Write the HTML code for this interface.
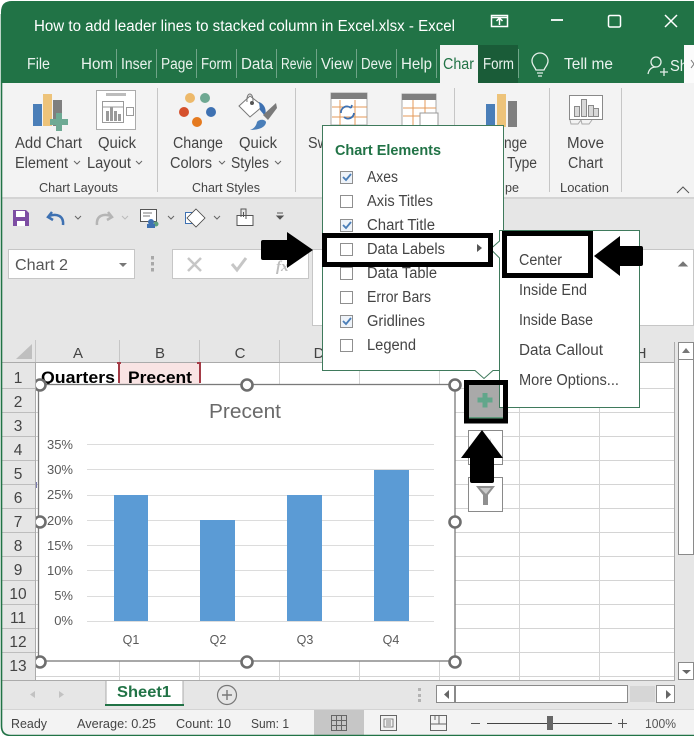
<!DOCTYPE html>
<html><head><meta charset="utf-8"><style>
html,body{margin:0;padding:0;background:#fff;width:694px;height:737px;overflow:hidden}
svg{display:block}
text{font-family:"Liberation Sans",sans-serif;fill:#444;font-size:15.5px}
.w{fill:#fff}
.t{fill:#eaf3ee}
</style></head><body>
<svg width="694" height="737" viewBox="0 0 694 737" xmlns="http://www.w3.org/2000/svg">
<rect width="694" height="737" fill="#fff"/>
<!-- window -->
<path d="M1 737V12Q1 1 12 1H694V83H1z" fill="#217346"/>
<text x="34" y="31" class="w" textLength="421" lengthAdjust="spacingAndGlyphs">How to add leader lines to stacked column in Excel.xlsx  -  Excel</text>
<g fill="none" stroke="#fff" stroke-width="1.5">
<rect x="491.500" y="15.500" width="16" height="11"/><path d="M499.500 25V18M496.500 21l3-3 3 3M491.500 17.500h16"/>
<path d="M551 20h12" stroke-width="1.800"/>
<rect x="608.500" y="15.500" width="12" height="11.500" rx="1.500"/>
<path d="M665 15l12 12M677 15l-12 12" stroke-width="1.500"/>
</g>
<!-- tabs -->
<g class="t">
<text class="t" x="27" y="69" textLength="23" lengthAdjust="spacingAndGlyphs">File</text>
<text class="t" x="81" y="69" textLength="32" lengthAdjust="spacingAndGlyphs">Hom</text>
<text class="t" x="121" y="69" textLength="31" lengthAdjust="spacingAndGlyphs">Inser</text>
<text class="t" x="161" y="69" textLength="32" lengthAdjust="spacingAndGlyphs">Page</text>
<text class="t" x="201" y="69" textLength="31" lengthAdjust="spacingAndGlyphs">Form</text>
<text class="t" x="241" y="69" textLength="32" lengthAdjust="spacingAndGlyphs">Data</text>
<text class="t" x="281" y="69" textLength="31" lengthAdjust="spacingAndGlyphs">Revie</text>
<text class="t" x="321" y="69" textLength="32" lengthAdjust="spacingAndGlyphs">View</text>
<text class="t" x="361" y="69" textLength="31" lengthAdjust="spacingAndGlyphs">Deve</text>
<text class="t" x="401" y="69" textLength="31" lengthAdjust="spacingAndGlyphs">Help</text>
</g>
<g stroke="#6fa488" stroke-width="1"><path d="M116.500 49V78M156.500 49V78M196.500 49V78M236.500 49V78M276.500 49V78M316.500 49V78M356.500 49V78M396.500 49V78M436.500 49V78M518.500 49V78"/></g>
<rect x="440" y="45" width="38" height="38" fill="#f3f3f3"/>
<text x="443" y="69" style="fill:#217346" textLength="31" lengthAdjust="spacingAndGlyphs">Char</text>
<rect x="478" y="45" width="40" height="38" fill="#1a5c38"/>
<text class="t" x="483" y="69" textLength="31" lengthAdjust="spacingAndGlyphs">Form</text>
<g fill="none" stroke="#e4efe9" stroke-width="1.300">
<path d="M536 70c-1-3-4-5-4-9a8 8 0 0 1 16 0c0 4-3 6-4 9zM537 73h6M538 76h4"/>
<circle cx="656" cy="62" r="5"/><path d="M648 74c1-5 4-7 8-7M660 72h8M664 68v8"/>
</g>
<text class="t" x="564" y="69" textLength="49" lengthAdjust="spacingAndGlyphs">Tell me</text>
<text class="t" x="670" y="71" textLength="18" lengthAdjust="spacingAndGlyphs">Sh</text>
<rect x="684" y="45" width="10" height="38" fill="#fbfbfb"/>
<path d="M691 60l3 4-3 4" fill="none" stroke="#777" stroke-width="1"/>
<!-- ribbon -->
<rect x="2" y="83" width="692" height="114" fill="#f3f3f3"/>
<rect x="2" y="197" width="692" height="2" fill="#d4d4d4"/>
<g fill="#c6c6c6"><rect x="157" y="88" width="1" height="104"/><rect x="295" y="88" width="1" height="104"/><rect x="454" y="88" width="1" height="104"/><rect x="549" y="88" width="1" height="104"/><rect x="621" y="88" width="1" height="104"/></g>
<!-- add chart element -->
<rect x="33" y="104" width="9" height="22" fill="#4a7eb8"/><rect x="43" y="94" width="9" height="32" fill="#edc37a"/><rect x="53" y="100" width="9" height="26" fill="#7f7f7f"/>
<path d="M56 113h6v6h6v6h-6v6h-6v-6h-6v-6h6z" fill="#6eaa94"/>
<!-- quick layout -->
<rect x="96.500" y="90.500" width="39" height="39" fill="#fff" stroke="#ababab"/>
<rect x="106" y="93" width="20" height="3" fill="#bcbcbc"/>
<g fill="none" stroke="#9a9a9a"><rect x="102.500" y="101.500" width="21" height="21"/><path d="M103 107h20"/><rect x="126.500" y="107.500" width="7" height="8"/></g>
<g fill="#9a9a9a"><rect x="106" y="111" width="3" height="10"/><rect x="110" y="107" width="3" height="14"/><rect x="114" y="111" width="3" height="10"/><rect x="118" y="114" width="3" height="7"/></g>
<!-- change colors -->
<circle cx="190" cy="98" r="5" fill="#edb96a"/><circle cx="205" cy="98" r="5" fill="#6ea892"/><circle cx="184" cy="112" r="5" fill="#d5502c"/><circle cx="211" cy="112" r="5" fill="#3e71b2"/><circle cx="197" cy="122" r="5" fill="#e57a1f"/>
<!-- quick styles -->
<path d="M239 106l11-10 13 10-13 11z" fill="#fff" stroke="#777" stroke-width="1"/>
<path d="M247 102c-1-10 6-11 6-1" fill="none" stroke="#777"/>
<circle cx="252" cy="103" r="2" fill="#555"/>
<path d="M259 102c5 2 8 7 6 14l-5-6z" fill="#3e71b2"/>
<path d="M263 115l13-12 1 5-9 12z" fill="#7a7a7a"/>
<path d="M250 130c3-1 6-3 7-8 2-3 8-3 9 0 0 4-5 8-16 8z" fill="#4a7eb8"/>
<!-- switch / select -->
<rect x="331" y="93" width="36" height="32" fill="#fff" stroke="#aaa"/><rect x="331" y="93" width="36" height="6" fill="#7f7f7f"/>
<path d="M340 100v25M355 100v25M332 107h35M332 117h35" stroke="#e49a58" fill="none"/>
<path d="M341 113a6 6 0 0 1 10-5M351 108l1-3M354 113a6 6 0 0 1-10 4" stroke="#3e71b2" stroke-width="1.800" fill="none"/>
<rect x="402" y="94" width="34" height="32" fill="#fff" stroke="#aaa"/><rect x="402" y="94" width="34" height="6" fill="#7f7f7f"/>
<path d="M413 100v25M425 100v25M403 108h33M403 116h33" stroke="#e49a58" fill="none"/>
<rect x="420" y="113" width="18" height="14" fill="#fff" stroke="#999"/>
<!-- change type -->
<rect x="486" y="104" width="9" height="23" fill="#4a7eb8"/><rect x="497" y="94" width="9" height="33" fill="#edc37a"/><rect x="508" y="101" width="9" height="26" fill="#7f7f7f"/>
<!-- move chart -->
<rect x="569.500" y="95.500" width="33" height="24" fill="#fff" stroke="#8a8a8a"/>
<g fill="#d9d9d9" stroke="#8a8a8a"><rect x="574.500" y="106.500" width="5" height="10"/><rect x="581.500" y="99.500" width="5" height="17"/><rect x="588.500" y="105.500" width="5" height="11"/><rect x="593.500" y="108.500" width="5" height="8"/></g>
<path d="M570 120l1 4h7l3-4M581 120l1 4h7l3-4" fill="none" stroke="#aaa"/>
<text x="15" y="148" textLength="67" lengthAdjust="spacingAndGlyphs">Add Chart</text>
<text x="15" y="168" textLength="53" lengthAdjust="spacingAndGlyphs">Element</text>
<text x="98" y="148" textLength="38" lengthAdjust="spacingAndGlyphs">Quick</text>
<text x="87" y="168" textLength="44" lengthAdjust="spacingAndGlyphs">Layout</text>
<text x="173" y="148" textLength="50" lengthAdjust="spacingAndGlyphs">Change</text>
<text x="170" y="168" textLength="42" lengthAdjust="spacingAndGlyphs">Colors</text>
<text x="239" y="148" textLength="38" lengthAdjust="spacingAndGlyphs">Quick</text>
<text x="231" y="168" textLength="38" lengthAdjust="spacingAndGlyphs">Styles</text>
<text x="308" y="148" textLength="20" lengthAdjust="spacingAndGlyphs">Sw</text>
<text x="504" y="148" textLength="23" lengthAdjust="spacingAndGlyphs">nge</text>
<text x="507" y="168" textLength="30" lengthAdjust="spacingAndGlyphs">Type</text>
<text x="567" y="148" textLength="37" lengthAdjust="spacingAndGlyphs">Move</text>
<text x="568" y="168" textLength="35" lengthAdjust="spacingAndGlyphs">Chart</text>
<g fill="none" stroke="#666"><path d="M74 161l3 3 3-3M136 161l3 3 3-3M219 161l3 3 3-3M275 161l3 3 3-3"/></g>
<text x="39" y="192" style="font-size:13px" textLength="79" lengthAdjust="spacingAndGlyphs">Chart Layouts</text>
<text x="192" y="192" style="font-size:13px" textLength="68" lengthAdjust="spacingAndGlyphs">Chart Styles</text>
<text x="505" y="192" style="font-size:13px" textLength="14" lengthAdjust="spacingAndGlyphs">pe</text>
<text x="560" y="192" style="font-size:13px" textLength="49" lengthAdjust="spacingAndGlyphs">Location</text>
<path d="M677 193l6-6 6 6" fill="none" stroke="#555" stroke-width="1"/>
<!-- QAT + formula band -->
<rect x="2" y="199" width="692" height="141" fill="#e6e6e6"/>
<path d="M13 210h13l3 3v13H13z" fill="#7d4da3"/><rect x="16" y="211" width="9" height="6" fill="#fff"/><rect x="17" y="221" width="8" height="5" fill="#fff"/>
<path d="M52 212l-4 5 5 3M49 216c8-3 15 0 14 9" fill="none" stroke="#3e71b2" stroke-width="2.500"/>
<path d="M108 212l4 5-5 3M111 216c-8-3-15 0-14 9" fill="none" stroke="#b5b5b5" stroke-width="2.500"/>
<g fill="none" stroke="#666" stroke-width="1"><path d="M75 216l3 3 3-3M168 216l3 3 3-3M214 216l3 3 3-3"/></g>
<path d="M122 216l3 3 3-3" fill="none" stroke="#bbb"/>
<rect x="140.500" y="209.500" width="16" height="12" fill="#fff" stroke="#555"/><path d="M143 213h9M143 216h7" stroke="#777"/><circle cx="151" cy="222" r="3" fill="#3e71b2"/><circle cx="156" cy="224" r="2.500" fill="#5da07d"/><rect x="147" y="224" width="8" height="4" fill="#3e71b2"/>
<path d="M185.500 212.500h11v11h-11z" fill="#fff" stroke="#3e71b2"/><path d="M196 209l9 9-9 9-9-9z" fill="#fff" stroke="#444" stroke-width=".8"/>
<rect x="237" y="215.500" width="16" height="10" fill="#fff" stroke="#555"/><path d="M241 217v-8h5v10M243.500 212v5" fill="none" stroke="#555"/>
<path d="M277 213h6M277 216l3 3 3-3z" stroke="#555" fill="#555"/>
<rect x="8.500" y="249.500" width="126" height="29" fill="#fff" stroke="#c6c6c6"/>
<text x="15" y="270" style="fill:#555" textLength="53" lengthAdjust="spacingAndGlyphs">Chart 2</text>
<path d="M119 263h8l-4 4z" fill="#777"/>
<g fill="#a8a8a8"><rect x="151" y="256" width="3" height="3.500"/><rect x="151" y="262" width="3" height="3.500"/><rect x="151" y="268" width="3" height="3.500"/></g>
<rect x="172.500" y="249.500" width="136" height="29" fill="#fff" stroke="#c6c6c6"/>
<path d="M188 258l13 13M201 258l-13 13" stroke="#c6c6c6" stroke-width="2.500"/>
<path d="M232 264l5 6 9-12" stroke="#c6c6c6" stroke-width="3" fill="none"/>
<text x="276" y="271" style="fill:#bdbdbd;font:italic bold 15px 'Liberation Serif',serif">fx</text>
<rect x="312.500" y="249.500" width="381" height="76" fill="#fff" stroke="#c6c6c6"/>
<path d="M679 266l4-4 4 4z" fill="#777" stroke="#777"/>
<!-- sheet -->
<rect x="2" y="340" width="692" height="341" fill="#e6e6e6"/>
<rect x="36" y="363" width="638" height="317" fill="#fff"/>
<path d="M32 344v15H16z" fill="#bfbfbf"/>
<rect x="2" y="362" width="673" height="1" fill="#ababab"/>
<g stroke="#c6c6c6" stroke-width="1"><path d="M35.500 340V362M119.500 340V362M199.500 340V362M279.500 340V362M359.500 340V362"/></g>
<text x="78" y="358" text-anchor="middle" style="font-size:15px">A</text>
<text x="160" y="358" text-anchor="middle" style="font-size:15px">B</text>
<text x="240" y="358" text-anchor="middle" style="font-size:15px">C</text>
<text x="319" y="358" text-anchor="middle" style="font-size:15px">D</text>
<text x="641" y="358" text-anchor="middle" style="font-size:15px">H</text>
<!-- gridlines -->
<g stroke="#d4d4d4" stroke-width="1">
<path d="M36 388.500H674M36 412.500H674M36 436.500H674M36 460.500H674M36 484.500H674M36 508.500H674M36 532.500H674M36 556.500H674M36 580.500H674M36 604.500H674M36 628.500H674M36 652.500H674M36 676.500H674"/>
<path d="M119.500 363V680M199.500 363V680M279.500 363V680M359.500 363V680M439.500 363V680M519.500 363V680M599.500 363V680"/>
</g>
<rect x="120" y="363" width="80" height="21" fill="#f9e4e4"/>
<g fill="#a33b46"><rect x="118" y="363" width="2" height="20"/><rect x="199" y="363" width="2" height="20"/><rect x="117" y="362" width="4" height="2"/><rect x="197" y="362" width="4" height="2"/></g>
<rect x="674" y="342" width="1" height="339" fill="#ababab"/>
<text x="41" y="383" style="fill:#000;font-weight:bold;font-size:17px" textLength="74" lengthAdjust="spacingAndGlyphs">Quarters</text>
<text x="128" y="383" style="fill:#000;font-weight:bold;font-size:17px" textLength="64" lengthAdjust="spacingAndGlyphs">Precent</text>
<!-- chart -->
<rect x="38.500" y="384.500" width="416.500" height="276.500" fill="#fff" stroke="#7a7a7a" stroke-width="1.300"/>
<text x="209" y="418" style="fill:#6a6a6a;font-size:20px" textLength="72" lengthAdjust="spacingAndGlyphs">Precent</text>
<g stroke="#dcdcdc"><path d="M87 444.500H434M87 469.500H434M87 495.500H434M87 520.500H434M87 545.500H434M87 570.500H434M87 596.500H434M87 621.500H434"/></g>
<text x="73" y="449" text-anchor="end" style="fill:#595959;font-size:13px">35%</text>
<text x="73" y="474" text-anchor="end" style="fill:#595959;font-size:13px">30%</text>
<text x="73" y="499" text-anchor="end" style="fill:#595959;font-size:13px">25%</text>
<text x="73" y="525" text-anchor="end" style="fill:#595959;font-size:13px">20%</text>
<text x="73" y="550" text-anchor="end" style="fill:#595959;font-size:13px">15%</text>
<text x="73" y="575" text-anchor="end" style="fill:#595959;font-size:13px">10%</text>
<text x="73" y="600" text-anchor="end" style="fill:#595959;font-size:13px">5%</text>
<text x="73" y="625" text-anchor="end" style="fill:#595959;font-size:13px">0%</text>
<g fill="#5b9bd5"><rect x="114" y="495" width="34" height="126"/><rect x="200" y="520" width="35" height="101"/><rect x="287" y="495" width="35" height="126"/><rect x="374" y="470" width="35" height="151"/></g>
<text x="131" y="644" text-anchor="middle" style="fill:#595959;font-size:12.500px">Q1</text>
<text x="218" y="644" text-anchor="middle" style="fill:#595959;font-size:12.500px">Q2</text>
<text x="305" y="644" text-anchor="middle" style="fill:#595959;font-size:12.500px">Q3</text>
<text x="391" y="644" text-anchor="middle" style="fill:#595959;font-size:12.500px">Q4</text>
<g fill="#fff" stroke="#6e6e6e" stroke-width="2.600">
<circle cx="40" cy="385" r="5.500"/><circle cx="247" cy="385" r="5.500"/><circle cx="455" cy="385" r="5.500"/>
<circle cx="40" cy="522" r="5.500"/><circle cx="455" cy="522" r="5.500"/>
<circle cx="40" cy="662" r="5.500"/><circle cx="247" cy="662" r="5.500"/><circle cx="455" cy="662" r="5.500"/>
</g>
<!-- row headers (over the chart handles) -->
<rect x="2" y="363" width="33" height="317" fill="#e6e6e6"/>
<rect x="35" y="363" width="1" height="318" fill="#ababab"/>
<rect x="36" y="482" width="1" height="6" fill="#7a7ab0"/>
<g stroke="#bdbdbd"><path d="M2 388.500H35M2 412.500H35M2 436.500H35M2 460.500H35M2 484.500H35M2 508.500H35M2 532.500H35M2 556.500H35M2 580.500H35M2 604.500H35M2 628.500H35M2 652.500H35"/></g>
<text x="18" y="383" text-anchor="middle">1</text>
<text x="18" y="407" text-anchor="middle">2</text>
<text x="18" y="431" text-anchor="middle">3</text>
<text x="18" y="455" text-anchor="middle">4</text>
<text x="18" y="479" text-anchor="middle">5</text>
<text x="18" y="503" text-anchor="middle">6</text>
<text x="18" y="527" text-anchor="middle">7</text>
<text x="18" y="551" text-anchor="middle">8</text>
<text x="18" y="575" text-anchor="middle">9</text>
<text x="18" y="599" text-anchor="middle">10</text>
<text x="18" y="623" text-anchor="middle">11</text>
<text x="18" y="647" text-anchor="middle">12</text>
<text x="18" y="671" text-anchor="middle">13</text>
<!-- chart side buttons -->
<rect x="468" y="384" width="36" height="35" fill="#a9a9a9"/>
<rect x="468" y="417" width="36" height="2" fill="#5f9a7c"/>
<path d="M482.500 393h5v4.500h5v5h-5v5h-5v-5h-5v-5h5z" fill="#62a68b"/>
<rect x="468.500" y="430.500" width="34" height="34" fill="#fff" stroke="#8a8a8a"/>
<path d="M490 438l3 12h-4z" fill="#aaa"/>
<rect x="468.500" y="477.500" width="34" height="34" fill="#fff" stroke="#8a8a8a"/>
<path d="M476 486h19l-7 9v10h-5v-10z" fill="#8f8f8f"/><path d="M480 488h11l-5 6z" fill="#c9c9c9"/>
<path d="M482 430l21 28h-9v23q0 2-2 2h-20q-2 0-2-2v-23h-9z" fill="#000"/>
<!-- chart elements popup -->
<path d="M322.500 125.500H503.500V370.500H493l-9 8-9-8H322.500z" fill="#fff" stroke="#3f7a5c"/>
<text x="335" y="155" style="fill:#217346;font-weight:bold;font-size:14.500px" textLength="106" lengthAdjust="spacingAndGlyphs">Chart Elements</text>
<g fill="#fff" stroke="#8f8f8f">
<rect x="340.500" y="171.500" width="12" height="12" fill="#eef3f9"/><rect x="340.500" y="195.500" width="12" height="12"/><rect x="340.500" y="219.500" width="12" height="12" fill="#eef3f9"/><rect x="340.500" y="243.500" width="12" height="12"/><rect x="340.500" y="267.500" width="12" height="12"/><rect x="340.500" y="291.500" width="12" height="12"/><rect x="340.500" y="315.500" width="12" height="12" fill="#eef3f9"/><rect x="340.500" y="339.500" width="12" height="12"/>
</g>
<g fill="none" stroke="#4a7eb8" stroke-width="1.800"><path d="M343 177l3 3 5-6M343 225l3 3 5-6M343 321l3 3 5-6"/></g>
<text x="367" y="182" textLength="31" lengthAdjust="spacingAndGlyphs">Axes</text>
<text x="367" y="206" textLength="66" lengthAdjust="spacingAndGlyphs">Axis Titles</text>
<text x="367" y="230" textLength="68" lengthAdjust="spacingAndGlyphs">Chart Title</text>
<text x="367" y="254" textLength="78" lengthAdjust="spacingAndGlyphs">Data Labels</text>
<text x="367" y="278" textLength="70" lengthAdjust="spacingAndGlyphs">Data Table</text>
<text x="367" y="302" textLength="64" lengthAdjust="spacingAndGlyphs">Error Bars</text>
<text x="367" y="326" textLength="58" lengthAdjust="spacingAndGlyphs">Gridlines</text>
<text x="367" y="350" textLength="49" lengthAdjust="spacingAndGlyphs">Legend</text>
<path d="M477 244l5 4-5 4z" fill="#555"/>
<!-- submenu -->
<path d="M499.500 230.500H639.500V407.500H499.500V258l-9-9 9-8z" fill="#fff" stroke="#3f7a5c"/>
<text x="519" y="265" textLength="43" lengthAdjust="spacingAndGlyphs">Center</text>
<text x="519" y="295" textLength="68" lengthAdjust="spacingAndGlyphs">Inside End</text>
<text x="519" y="325" textLength="74" lengthAdjust="spacingAndGlyphs">Inside Base</text>
<text x="519" y="355" textLength="84" lengthAdjust="spacingAndGlyphs">Data Callout</text>
<text x="519" y="385" textLength="100" lengthAdjust="spacingAndGlyphs">More Options...</text>
<!-- black frames -->
<rect x="324.500" y="235.500" width="166" height="29" fill="none" stroke="#000" stroke-width="5"/>
<rect x="504.500" y="233.500" width="86" height="42" fill="none" stroke="#000" stroke-width="5"/>
<rect x="466.500" y="382.500" width="39" height="38.500" fill="none" stroke="#000" stroke-width="5"/>
<!-- big arrows -->
<path d="M261 242q0-2 2-2h24v-8l26 18-26 18v-8h-24q-2 0-2-2z" fill="#000"/>
<path d="M643 248q0-2-2-2h-21v-10l-26 20 26 20v-10h21q2 0 2-2z" fill="#000"/>
<!-- v scrollbar -->
<rect x="678.500" y="342.500" width="15" height="17" fill="#fff" stroke="#8a8a8a"/>
<path d="M682 353l4-5 4 5z" fill="#777"/>
<rect x="678.500" y="359.500" width="15" height="195" fill="#fff" stroke="#8a8a8a"/>
<rect x="678.500" y="662.500" width="15" height="17" fill="#fff" stroke="#8a8a8a"/>
<path d="M682 670h9l-4.500 4z" fill="#666"/>
<!-- tab bar -->
<rect x="2" y="680" width="692" height="29" fill="#e6e6e6"/>
<rect x="2" y="680" width="673" height="1" fill="#ababab"/>
<path d="M35 691l-5 3.500 5 3.500zM59 691l5 3.500-5 3.500z" fill="#c2c2c2"/>
<path d="M106 705V680.500H183V705" fill="#fff" stroke="#ababab"/>
<rect x="105" y="704" width="79" height="2" fill="#217346"/>
<text x="117" y="697" style="fill:#217346;font-weight:bold;font-size:16px" textLength="54" lengthAdjust="spacingAndGlyphs">Sheet1</text>
<circle cx="227" cy="695" r="9.500" fill="none" stroke="#777" stroke-width="1.200"/><path d="M222 695h10M227 690v10" stroke="#777" stroke-width="1.400"/>
<g fill="#b3b3b3"><rect x="418" y="688" width="3" height="3"/><rect x="418" y="694" width="3" height="3"/><rect x="418" y="699" width="3" height="3"/></g>
<rect x="436.500" y="685.500" width="191" height="17" fill="#fff" stroke="#8a8a8a"/>
<rect x="436.500" y="685.500" width="18" height="17" fill="#fff" stroke="#8a8a8a"/><rect x="454" y="686" width="2" height="16" fill="#8a8a8a"/>
<path d="M449 690v9l-5-4.500z" fill="#666"/>
<rect x="630" y="686" width="25" height="16" fill="#d6d6d6"/>
<rect x="656.500" y="685.500" width="18" height="17" fill="#fff" stroke="#8a8a8a"/>
<path d="M666 690v9l5-4.500z" fill="#666"/>
<!-- status -->
<rect x="2" y="709" width="692" height="26" fill="#f3f3f3"/>
<rect x="2" y="709" width="692" height="1" fill="#d4d4d4"/>
<rect x="314" y="710" width="50" height="25" fill="#c6c6c6"/>
<text x="11" y="728" style="font-size:13px" textLength="36" lengthAdjust="spacingAndGlyphs">Ready</text>
<text x="77" y="728" style="font-size:13px" textLength="79" lengthAdjust="spacingAndGlyphs">Average: 0.25</text>
<text x="176" y="728" style="font-size:13px" textLength="55" lengthAdjust="spacingAndGlyphs">Count: 10</text>
<text x="251" y="728" style="font-size:13px" textLength="38" lengthAdjust="spacingAndGlyphs">Sum: 1</text>
<g fill="none" stroke="#666"><rect x="331.500" y="715.500" width="15" height="15"/><path d="M336.500 716v14M341.500 716v14M332 720.500h14M332 725.500h14"/>
<rect x="380.500" y="715.500" width="16" height="15"/><path d="M384 719h9v8h-9zM386 721h5M386 723h5M386 725h5" stroke-width=".8"/>
<rect x="430.500" y="715.500" width="16" height="15"/><path d="M431 724h8v-8M439 724h7M435 716v4" />
</g>
<path d="M471 723.500h9" stroke="#555"/><path d="M487 723.500h125" stroke="#444"/>
<rect x="547" y="716" width="6" height="14" fill="#666"/>
<path d="M618 723.500h9M622.500 719v9" stroke="#555"/>
<text x="645" y="728" style="font-size:13px;fill:#555" textLength="31" lengthAdjust="spacingAndGlyphs">100%</text>
<!-- window edge -->
<path d="M1.500 14V726Q1.500 735.500 11 735.500H694" fill="none" stroke="#217346" stroke-width="1.600"/>
<rect x="0" y="736" width="694" height="1" fill="#fff"/>
</svg>
</body></html>
